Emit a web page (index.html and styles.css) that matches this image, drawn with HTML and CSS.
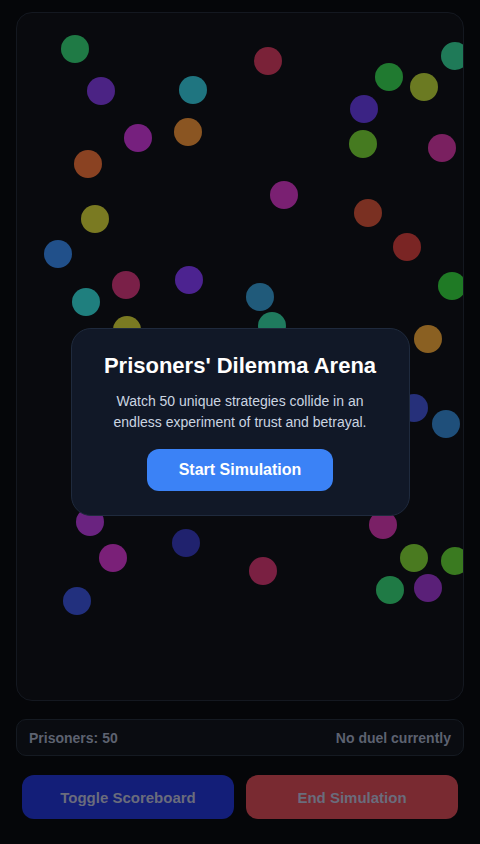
FILE: index.html
```html
<!DOCTYPE html>
<html>
<head>
    <title>Prisoners' Dilemma Arena</title>
    <meta charset="UTF-8">
    <link rel="stylesheet" href="styles.css">
</head>
<body>
    <div class="app">
        <div class="arena" id="arena"></div>

        <div class="stats-bar">
            <span>Prisoners: 50</span>
            <span>No duel currently</span>
        </div>

        <div class="controls">
            <button class="btn btn-blue">Toggle Scoreboard</button>
            <button class="btn btn-red">End Simulation</button>
        </div>
    </div>

    <div class="overlay">
        <div class="modal">
            <h1>Prisoners' Dilemma Arena</h1>
            <p>Watch 50 unique strategies collide in an endless experiment of trust and betrayal.</p>
            <button class="start-btn">Start Simulation</button>
        </div>
    </div>

<script>
    // x, y = centre of each prisoner on the page, then colour
    const prisoners = [
        [75, 49, '#1f7a45'], [101, 91, '#4b2384'], [193, 90, '#1f7580'],
        [138, 138, '#76207e'], [188, 132, '#8a5522'], [88, 164, '#8a4222'],
        [95, 219, '#7a7a22'], [58, 254, '#21508a'], [126, 285, '#7a2048'],
        [189, 280, '#4c2390'], [86, 302, '#1f7f7e'], [127, 330, '#7a7a22'],
        [268, 61, '#7a2238'], [389, 77, '#207a30'], [455, 56, '#1f7a58'],
        [424, 87, '#6b7a22'], [364, 109, '#3b2384'], [363, 144, '#457a20'],
        [442, 148, '#7a2060'], [284, 195, '#7a2072'], [368, 213, '#7a3022'],
        [407, 247, '#7a2524'], [452, 286, '#1f7a25'], [260, 297, '#205a7a'],
        [272, 326, '#1f7a5e'], [428, 339, '#8a6022'], [414, 408, '#26307a'],
        [446, 424, '#1f4f7a'], [90, 522, '#6a2380'], [113, 558, '#7a2078'],
        [186, 543, '#20226e'], [383, 525, '#7a2066'], [414, 558, '#4a7a20'],
        [455, 561, '#3a7a20'], [390, 590, '#1f7a45'], [428, 588, '#5a2078'],
        [263, 571, '#7a2042'], [77, 601, '#22307e']
    ];

    const arena = document.getElementById('arena');
    for (const [x, y, color] of prisoners) {
        const dot = document.createElement('div');
        dot.className = 'prisoner';
        dot.style.left = (x - 31) + 'px';
        dot.style.top = (y - 27) + 'px';
        dot.style.background = color;
        arena.appendChild(dot);
    }
</script>
</body>
</html>
```

FILE: styles.css
```css
body {
    margin: 0;
    background-color: #050609;
    font-family: "Liberation Sans", Arial, sans-serif;
}
.app {
    width: 480px;
    height: 844px;
    padding: 12px 16px 0 16px;
    box-sizing: border-box;
    display: flex;
    flex-direction: column;
}
.arena {
    position: relative;
    height: 689px;
    background: #090a0e;
    border: 1px solid #141820;
    border-radius: 16px;
    box-sizing: border-box;
    overflow: hidden;
}
.prisoner {
    position: absolute;
    width: 28px;
    height: 28px;
    border-radius: 50%;
}
.stats-bar {
    margin-top: 18px;
    height: 37px;
    display: flex;
    justify-content: space-between;
    align-items: center;
    padding: 0 12px;
    background: #0a0c11;
    border: 1px solid #151a22;
    border-radius: 10px;
    box-sizing: border-box;
    font-size: 14px;
    font-weight: bold;
    color: #5d6270;
}
.controls {
    margin-top: 19px;
    padding: 0 6px;
    display: grid;
    grid-template-columns: 1fr 1fr;
    gap: 12px;
}
.btn {
    height: 44px;
    border: none;
    border-radius: 12px;
    font-family: inherit;
    font-size: 15px;
    font-weight: bold;
    color: #6a6c7c;
}
.btn-blue { background: #131e78; }
.btn-red { background: #792a31; }

.overlay {
    position: fixed;
    inset: 0;
    display: flex;
    align-items: center;
    justify-content: center;
}
.modal {
    width: 339px;
    box-sizing: border-box;
    padding: 24px 20px 24px;
    background: #111827;
    border: 1px solid #1f2a3d;
    border-radius: 20px;
    text-align: center;
}
.modal h1 {
    margin: 0;
    font-size: 22px;
    color: #ffffff;
}
.modal p {
    margin: 12px 0 16px;
    font-size: 14px;
    line-height: 21px;
    color: #cbd5e1;
}
.start-btn {
    width: 186px;
    height: 42px;
    border: none;
    border-radius: 12px;
    background: #3b82f6;
    color: #ffffff;
    font-family: inherit;
    font-size: 16px;
    font-weight: bold;
}
```
